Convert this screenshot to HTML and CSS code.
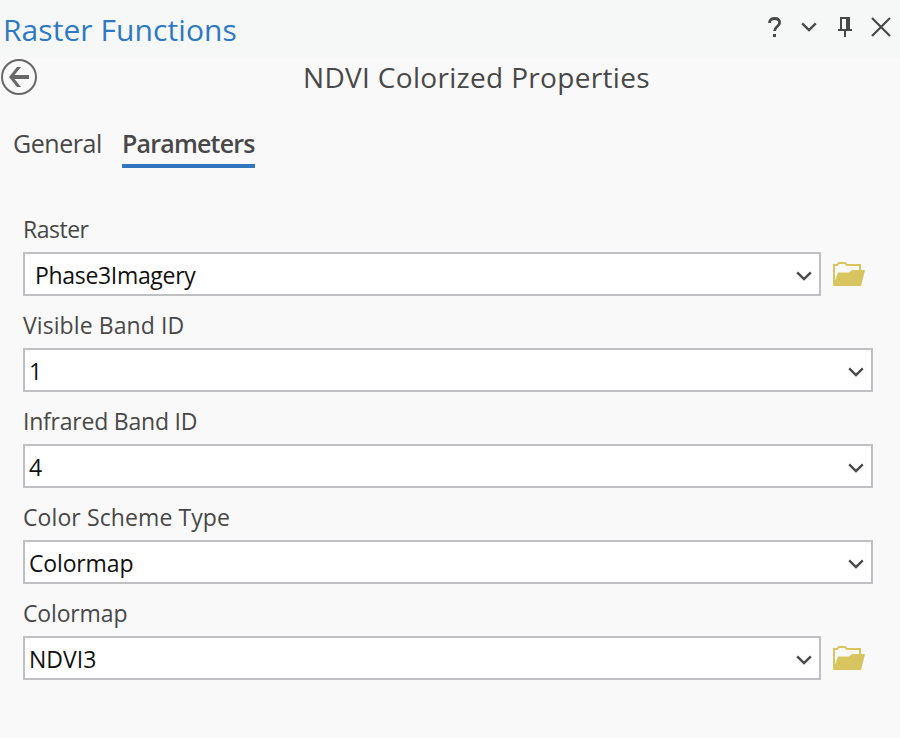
FILE: index.html
```html
<!DOCTYPE html>
<html lang="en">
<head>
<meta charset="utf-8">
<title>Raster Functions</title>
<link rel="stylesheet" href="styles.css">
</head>
<body>
<svg width="0" height="0" class="symbols" aria-hidden="true">
  <symbol id="chevron" viewBox="0 0 16 10"><path d="M1.2 1.3 8 8l6.8-6.7" fill="none" stroke="#484848" stroke-width="2.4"/></symbol>
  <symbol id="folder" viewBox="0 0 32 25"><path d="M1 23V3h3l2-2h6l2 2h13v5" fill="none" stroke="#d8c560" stroke-width="2"/><path d="M0 24 5 10.500h11l3-2.500h13l-4 16z" fill="#d8c560"/></symbol>
</svg>
<div class="pane">
  <header class="titlebar">
    <h1 class="title"><span>Raster Functions</span></h1>
    <div class="tools">
      <svg class="help" width="14" height="22" viewBox="0 0 14 22"><path d="M1.500 6C1.500 3 3.700 1.500 6.600 1.500c3.100 0 5 1.500 5 4.200 0 3.800-5 3.900-5 8.300" fill="none" stroke="#484848" stroke-width="2.8"/><path d="M5 17h3v3H5z" fill="#484848"/></svg>
      <svg width="16" height="10"><use href="#chevron"/></svg>
      <svg width="14" height="20" viewBox="0 0 14 20"><path d="M2 0h10v12h2v2H8v6H6v-6H0v-2h2zM4 2v10h4V2z" fill="#484848" fill-rule="evenodd"/></svg>
      <svg width="20" height="20" viewBox="0 0 20 20"><path d="m1 1 18 18M19 1 1 19" stroke="#484848" stroke-width="2.200"/></svg>
    </div>
  </header>
  <div class="subhead">
    <svg class="back" width="36" height="36" viewBox="0 0 36 36"><circle cx="18" cy="18" r="17" fill="none" stroke="#686868" stroke-width="2"/><path d="M8 18 16 8h4l-6.500 8H28v4H13.500l6.500 8h-4z" fill="#686868"/></svg>
    <h2 class="subtitle"><span>NDVI Colorized Properties</span></h2>
  </div>
  <nav class="tabs">
    <span class="tab general">General</span>
    <span class="tab active">Parameters</span>
  </nav>
  <main class="form">
    <div class="field">
      <div class="label l1"><span>Raster</span></div>
      <div class="row"><div class="select inset"><span class="v1">Phase3Imagery</span><svg width="16" height="10"><use href="#chevron"/></svg></div><svg class="folder" width="32" height="25"><use href="#folder"/></svg></div>
    </div>
    <div class="field">
      <div class="label l2"><span>Visible Band ID</span></div>
      <div class="row"><div class="select"><span>1</span><svg width="16" height="10"><use href="#chevron"/></svg></div></div>
    </div>
    <div class="field">
      <div class="label l3"><span>Infrared Band ID</span></div>
      <div class="row"><div class="select"><span>4</span><svg width="16" height="10"><use href="#chevron"/></svg></div></div>
    </div>
    <div class="field">
      <div class="label l4"><span>Color Scheme Type</span></div>
      <div class="row"><div class="select"><span class="v4">Colormap</span><svg width="16" height="10"><use href="#chevron"/></svg></div></div>
    </div>
    <div class="field">
      <div class="label l5"><span>Colormap</span></div>
      <div class="row"><div class="select"><span class="v5">NDVI3</span><svg width="16" height="10"><use href="#chevron"/></svg></div><svg class="folder" width="32" height="25"><use href="#folder"/></svg></div>
    </div>
  </main>
</div>
</body>
</html>
```
FILE: styles.css
```css
* { box-sizing: border-box; }
body { margin: 0; background: #f9f9f9; font-family: "Segoe UI", "Open Sans", sans-serif; color: #484848; }
svg { display: block; flex: none; }
.symbols { position: absolute; }
h1, h2 { margin: 0; font-weight: 400; white-space: nowrap; }
.pane { width: 900px; height: 738px; overflow: hidden; }
.titlebar { height: 57px; background: #f6f8f8; display: flex; justify-content: space-between; padding: 0 9px 0 3px; }
.title { font-size: 30px; line-height: 60px; letter-spacing: 0.07px; color: #2f78c2; }
.tools { display: flex; align-items: center; height: 54px; }
.tools svg + svg { margin-left: 19px; }
.tools svg:nth-child(3) { margin-left: 21px; }
.help { margin-top: 2px; }
.subhead { height: 40px; display: flex; align-items: center; padding-left: 1px; }
.subtitle { font-size: 28px; line-height: 40px; margin-left: 266px; letter-spacing: 0.32px; }
.tabs { height: 71px; display: flex; align-items: flex-end; padding-left: 13px; }
.tab { font-size: 25px; line-height: 36px; height: 43px; white-space: nowrap; }
.general { width: 109px; letter-spacing: -0.45px; }
.active { width: 133px; font-weight: 600; letter-spacing: -0.8px; border-bottom: 4px solid #3276bf; }
.form { padding: 44px 27px 0 23px; }
.field { height: 96px; }
.label { font-size: 23px; line-height: 34px; height: 40px; white-space: nowrap; }
.l1 { letter-spacing: -0.5px; }
.l2 { letter-spacing: 0.08px; }
.l3 { letter-spacing: -0.22px; }
.l4 { letter-spacing: 0.1px; }
.l5 { letter-spacing: -0.15px; }
.v1 { letter-spacing: -0.32px; }
.v4 { letter-spacing: -0.15px; }
.row { display: flex; align-items: center; gap: 12px; }
.select { flex: 1; height: 44px; border: 2px solid #bfbfc4; background: #fff; color: #111; font-size: 23px; line-height: 38px; padding: 2px 7px 0 4px; display: flex; justify-content: space-between; align-items: center; }
.select svg { margin-top: 2px; }
.inset { padding-left: 10px; }
.folder { margin-right: -15px; }
.row:has(.folder) { padding-right: 23px; }
```
